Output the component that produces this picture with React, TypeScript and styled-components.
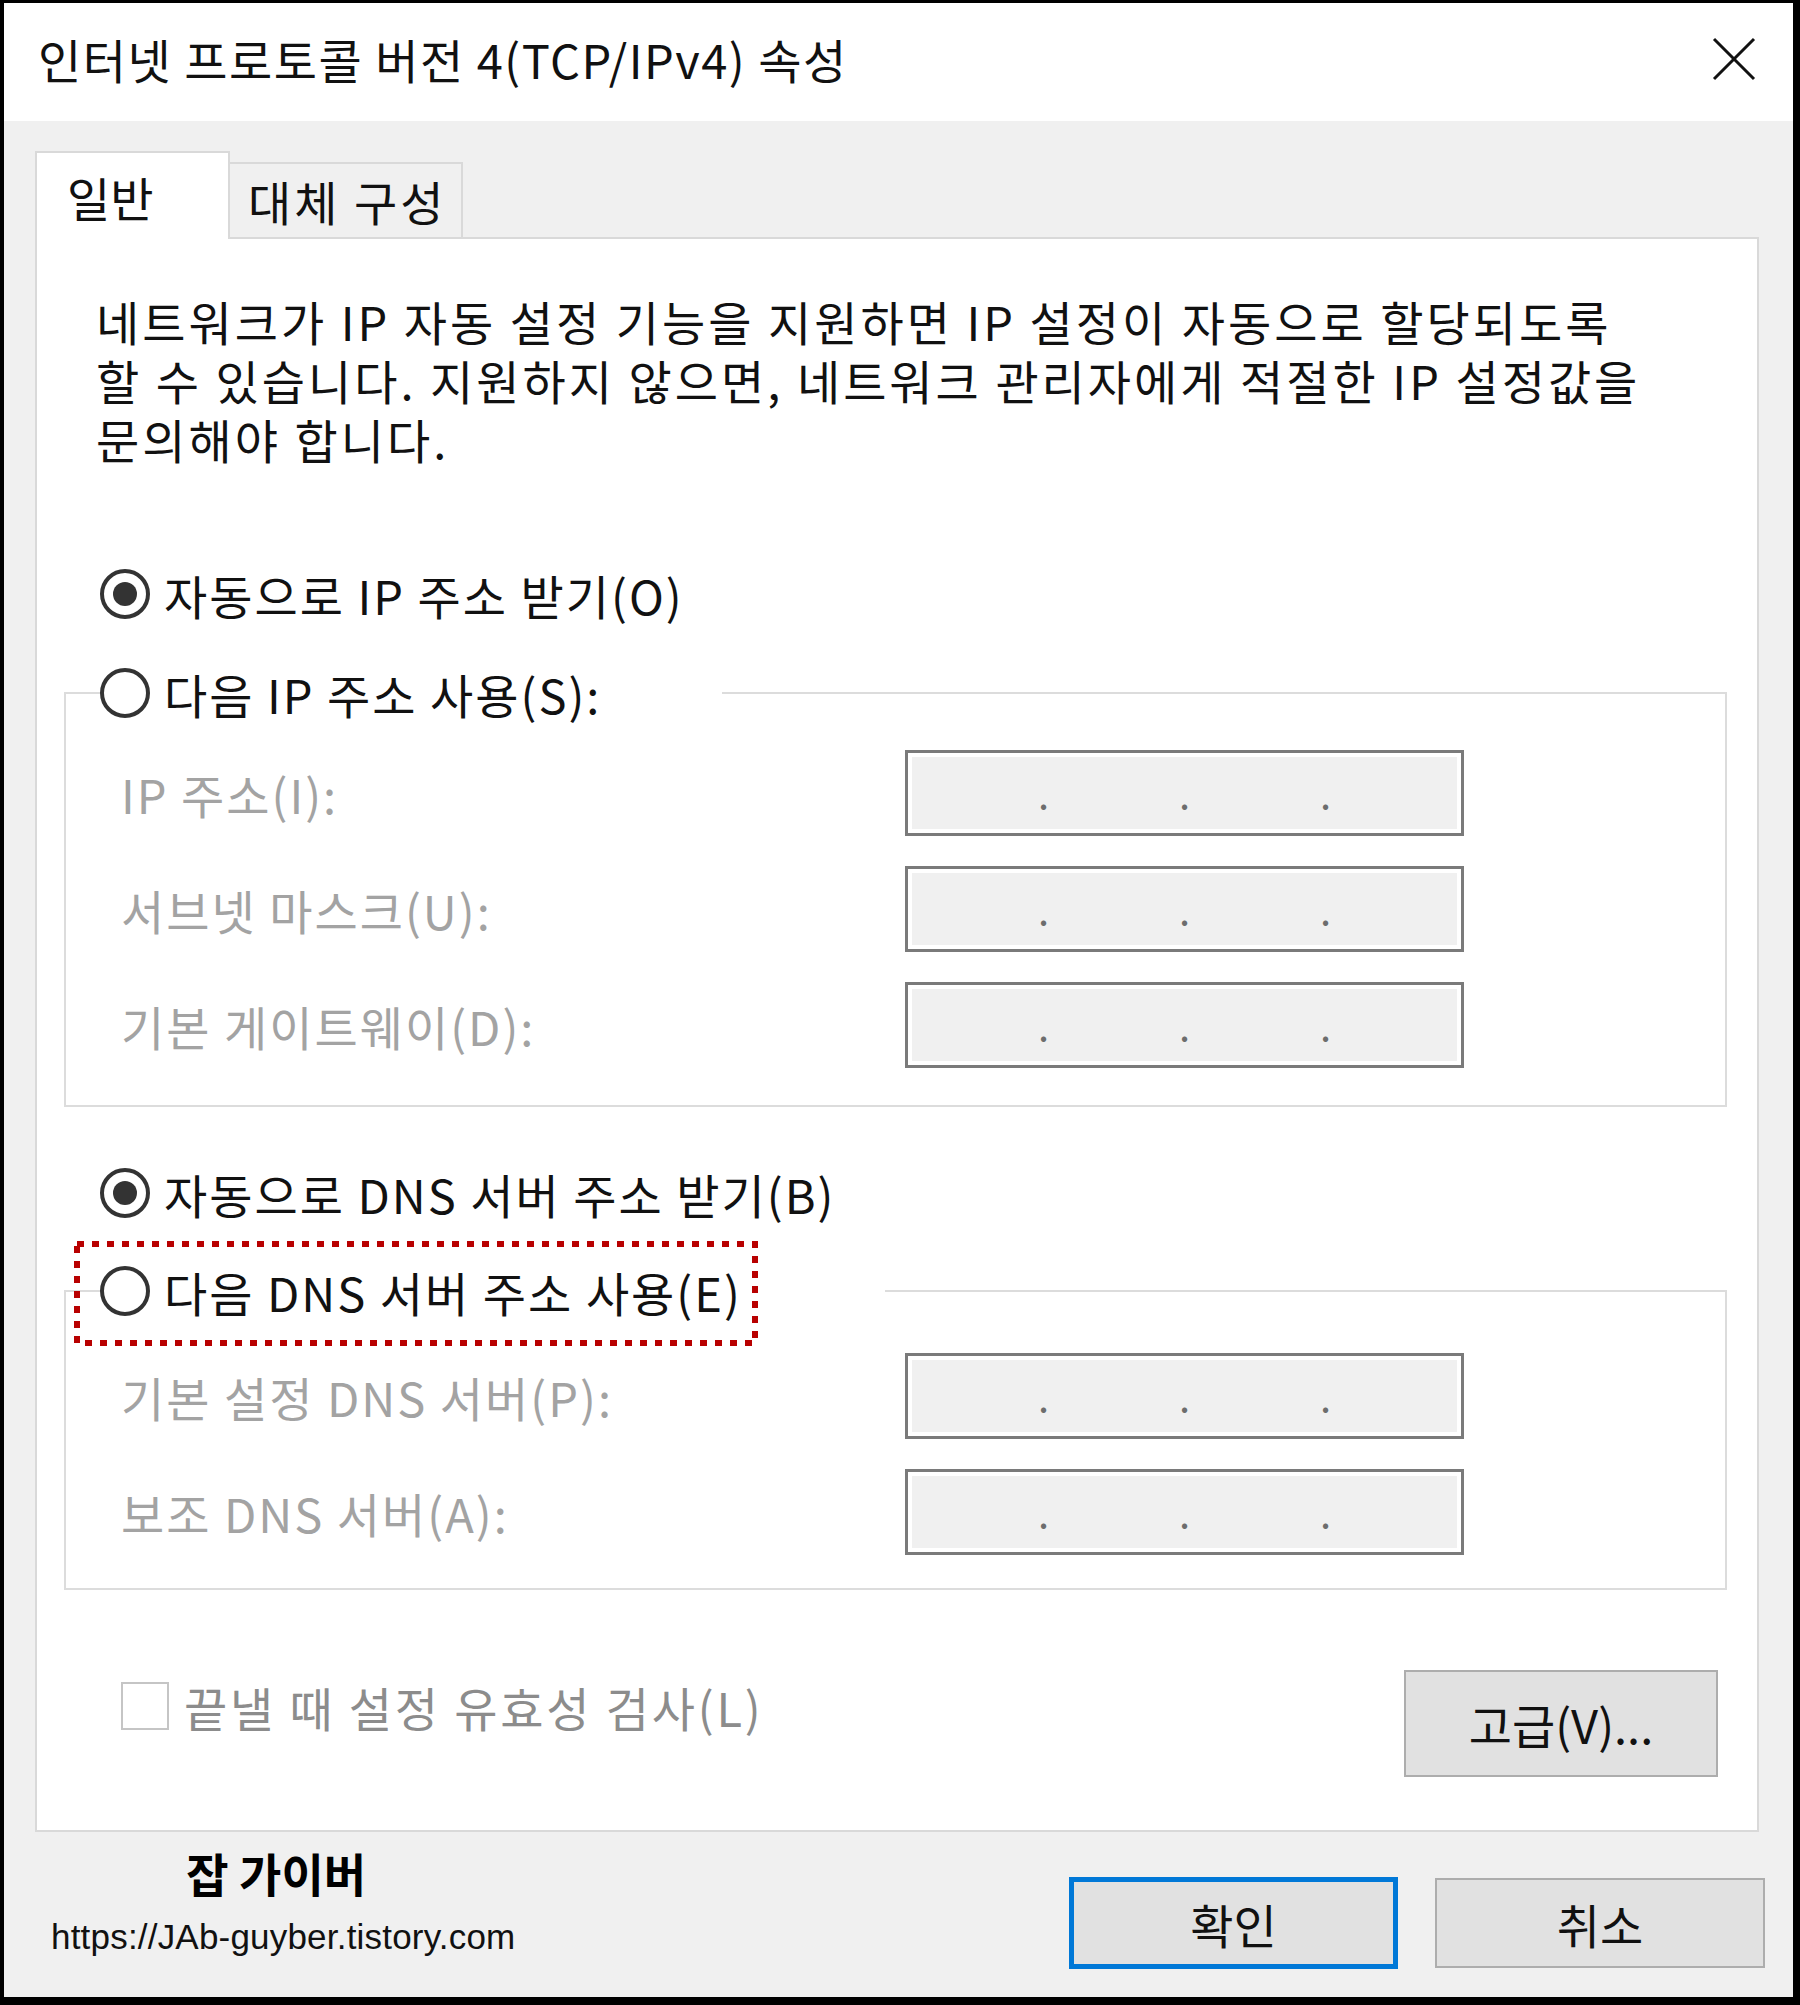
import React from 'react';
import styled, { createGlobalStyle } from 'styled-components';

const GlobalStyle = createGlobalStyle`
  html, body {
    margin: 0;
    padding: 0;
    background: #000;
  }
  body {
    font-family: "Noto Sans CJK KR", "Noto Sans", sans-serif;
    color: #000;
  }
  * {
    box-sizing: border-box;
  }
`;

const ipRows = [
  { label: 'IP 주소(I):' },
  { label: '서브넷 마스크(U):' },
  { label: '기본 게이트웨이(D):' },
];

const dnsRows = [
  { label: '기본 설정 DNS 서버(P):' },
  { label: '보조 DNS 서버(A):' },
];

const IpField = () => (
  <IpBox>
    <Dot>.</Dot>
    <Dot>.</Dot>
    <Dot>.</Dot>
  </IpBox>
);

const Radio = ({ checked, children }: { checked?: boolean; children: React.ReactNode }) => (
  <RadioRow>
    <RadioCircle $checked={checked} />
    <RadioText>{children}</RadioText>
  </RadioRow>
);

const App = () => {
  return (
    <>
      <GlobalStyle />
      <Frame>
        <Window>
          <TitleBar>
            <Title>인터넷 프로토콜 버전 4(TCP/IPv4) 속성</Title>
            <CloseIcon width="44" height="44" viewBox="0 0 44 44">
              <line x1="2" y1="2" x2="42" y2="42" stroke="#111" strokeWidth="3" />
              <line x1="42" y1="2" x2="2" y2="42" stroke="#111" strokeWidth="3" />
            </CloseIcon>
          </TitleBar>

          <Body>
            <TabBar>
              <Tab $active>일반</Tab>
              <Tab>대체 구성</Tab>
            </TabBar>

            <Panel>
              <Description>
                <span>네트워크가 IP 자동 설정 기능을 지원하면 IP 설정이 자동으로 할당되도록</span>
                <span>할 수 있습니다. 지원하지 않으면, 네트워크 관리자에게 적절한 IP 설정값을</span>
                <span>문의해야 합니다.</span>
              </Description>

              <RadioLine $top={96}>
                <Radio checked>자동으로 IP 주소 받기(O)</Radio>
              </RadioLine>

              <Group $top={39}>
                <GroupLegend $width={622}>
                  <Radio>다음 IP 주소 사용(S):</Radio>
                </GroupLegend>
                <FieldGrid $padTop={27} $padBottom={37}>
                  {ipRows.map((row) => (
                    <React.Fragment key={row.label}>
                      <FieldLabel>{row.label}</FieldLabel>
                      <IpField />
                    </React.Fragment>
                  ))}
                </FieldGrid>
              </Group>

              <RadioLine $top={56}>
                <Radio checked>자동으로 DNS 서버 주소 받기(B)</Radio>
              </RadioLine>

              <Group $top={38}>
                <GroupLegend $width={785}>
                  <Radio>다음 DNS 서버 주소 사용(E)</Radio>
                  <Highlight width="684" height="105" viewBox="0 0 684 105">
                    <rect
                      x="3"
                      y="3"
                      width="678"
                      height="99"
                      fill="none"
                      stroke="#b80000"
                      strokeWidth="6"
                      strokeDasharray="7 8"
                    />
                  </Highlight>
                </GroupLegend>
                <FieldGrid $padTop={32} $padBottom={33}>
                  {dnsRows.map((row) => (
                    <React.Fragment key={row.label}>
                      <FieldLabel>{row.label}</FieldLabel>
                      <IpField />
                    </React.Fragment>
                  ))}
                </FieldGrid>
              </Group>

              <CheckRow>
                <CheckLabel>
                  <CheckBox />
                  <span>끝낼 때 설정 유효성 검사(L)</span>
                </CheckLabel>
                <Button $w={314} $h={107}>고급(V)...</Button>
              </CheckRow>
            </Panel>

            <Footer>
              <Watermark>
                <Brand>잡 가이버</Brand>
                <Url>https://JAb-guyber.tistory.com</Url>
              </Watermark>
              <ButtonRow>
                <Button $w={329} $h={92} $primary>확인</Button>
                <Button $w={330} $h={90}>취소</Button>
              </ButtonRow>
            </Footer>
          </Body>
        </Window>
      </Frame>
    </>
  );
};

export default App;

const Frame = styled.div`
  width: 1800px;
  height: 2005px;
  padding: 3px 7px 8px 4px;
  background: #000;
  display: flex;
`

const Window = styled.div`
  flex: 1;
  display: flex;
  flex-direction: column;
  background: #f0f0f0;
`

const TitleBar = styled.div`
  height: 118px;
  flex-shrink: 0;
  background: #fff;
  display: flex;
  align-items: center;
  justify-content: space-between;
  padding: 0 37px 0 34px;
`

const Title = styled.div`
  font-size: 47px;
  line-height: 1;
  letter-spacing: 1.5px;
  color: #111;
  white-space: nowrap;
  margin-top: -8px;
`

const CloseIcon = styled.svg`
  display: block;
  margin-top: -6px;
`

const Body = styled.div`
  flex: 1;
  min-height: 0;
  display: flex;
  flex-direction: column;
  padding: 30px 28px 0 31px;
`

const TabBar = styled.div`
  display: flex;
  align-items: flex-end;
  margin-bottom: -2px;
  position: relative;
  z-index: 1;
`

const Tab = styled.div<{ $active?: boolean }>`
  height: ${(p) => (p.$active ? 88 : 77)}px;
  width: ${(p) => (p.$active ? 195 : 233)}px;
  padding-left: ${(p) => (p.$active ? 30 : 18)}px;
  display: flex;
  align-items: center;
  background: ${(p) => (p.$active ? '#fff' : '#f0f0f0')};
  border: 2px solid #d9d9d9;
  border-bottom: ${(p) => (p.$active ? 'none' : '2px solid #d9d9d9')};
  border-left: ${(p) => (p.$active ? '2px solid #d9d9d9' : 'none')};
  font-size: 47px;
  letter-spacing: ${(p) => (p.$active ? 0 : 3)}px;
  color: #111;
  white-space: nowrap;
`

const Panel = styled.div`
  flex: 1;
  min-height: 0;
  display: flex;
  flex-direction: column;
  background: #fff;
  border: 2px solid #d9d9d9;
  margin-right: 6px;
  padding: 52px 30px 0 27px;
`

const Description = styled.p`
  margin: 0 0 0 32px;
  font-size: 47px;
  line-height: 59px;
  letter-spacing: 3px;
  color: #111;
  white-space: nowrap;
  > span {
    display: block;
  }
`

const RadioLine = styled.div<{ $top: number }>`
  margin-top: ${(p) => p.$top}px;
  margin-left: 36px;
`

const RadioRow = styled.div`
  display: flex;
  align-items: center;
  gap: 14px;
  height: 60px;
`

const RadioCircle = styled.span<{ $checked?: boolean }>`
  width: 50px;
  height: 50px;
  flex-shrink: 0;
  border: 4px solid #333;
  border-radius: 50%;
  background: #fff;
  display: flex;
  align-items: center;
  justify-content: center;
  &::after {
    content: '';
    width: 24px;
    height: 24px;
    border-radius: 50%;
    background: ${(p) => (p.$checked ? '#333' : 'transparent')};
  }
`

const RadioText = styled.span`
  font-size: 47px;
  line-height: 1;
  letter-spacing: 2px;
  color: #111;
  white-space: nowrap;
`

const Group = styled.fieldset<{ $top: number }>`
  margin: ${(p) => p.$top}px 0 0 0;
  padding: 0;
  min-width: 0;
  border: 2px solid #dcdcdc;
`

const GroupLegend = styled.legend<{ $width: number }>`
  width: ${(p) => p.$width}px;
  margin-left: 34px;
  padding: 0;
  position: relative;
`

const Highlight = styled.svg`
  position: absolute;
  left: -26px;
  top: -20px;
  pointer-events: none;
`

const FieldGrid = styled.div<{ $padTop: number; $padBottom: number }>`
  display: grid;
  grid-template-columns: 784px 559px;
  row-gap: 30px;
  align-items: center;
  padding: ${(p) => p.$padTop}px 0 ${(p) => p.$padBottom}px 55px;
`

const FieldLabel = styled.span`
  font-size: 47px;
  line-height: 1;
  letter-spacing: 2px;
  color: #a3a3a3;
  white-space: nowrap;
`

const IpBox = styled.div`
  height: 86px;
  border: 3px solid #7a7a7a;
  background: #f0f0f0;
  box-shadow: inset 0 0 0 4px #fff;
  display: flex;
  justify-content: space-evenly;
  align-items: center;
`

const Dot = styled.span`
  font-size: 40px;
  line-height: 1;
  color: #6d6d6d;
  margin-bottom: 2px;
`

const CheckRow = styled.div`
  display: flex;
  justify-content: space-between;
  align-items: flex-start;
  margin-top: 80px;
  padding: 0 9px 0 57px;
`

const CheckLabel = styled.label`
  display: flex;
  align-items: center;
  gap: 15px;
  margin-top: 12px;
  font-size: 47px;
  line-height: 1;
  letter-spacing: 2.8px;
  color: #8c8c8c;
  white-space: nowrap;
`

const CheckBox = styled.span`
  width: 48px;
  height: 48px;
  border: 2px solid #c5c5c5;
  background: #fff;
  flex-shrink: 0;
`

const Button = styled.button<{ $w: number; $h: number; $primary?: boolean }>`
  width: ${(p) => p.$w}px;
  height: ${(p) => p.$h}px;
  background: #e1e1e1;
  border: ${(p) => (p.$primary ? '5px solid #0078d7' : '2px solid #adadad')};
  font-family: "Noto Sans CJK KR", "Noto Sans", sans-serif;
  font-size: 47px;
  line-height: 1;
  color: #111;
  padding: 0;
`

const Footer = styled.div`
  height: 165px;
  flex-shrink: 0;
  display: flex;
  justify-content: space-between;
  align-items: flex-start;
  padding-left: 16px;
`

const Watermark = styled.div`
  display: flex;
  flex-direction: column;
  align-items: center;
  padding-top: 14px;
`

const Brand = styled.div`
  font-size: 46px;
  font-weight: 700;
  line-height: 52px;
  color: #000;
  margin-right: 14px;
`

const Url = styled.div`
  margin-top: 19px;
  font-family: "Liberation Sans", Arial, sans-serif;
  font-size: 35px;
  line-height: 40px;
  letter-spacing: 0.2px;
  color: #111;
  white-space: nowrap;
`

const ButtonRow = styled.div`
  display: flex;
  align-items: center;
  gap: 37px;
  padding-top: 45px;
`
